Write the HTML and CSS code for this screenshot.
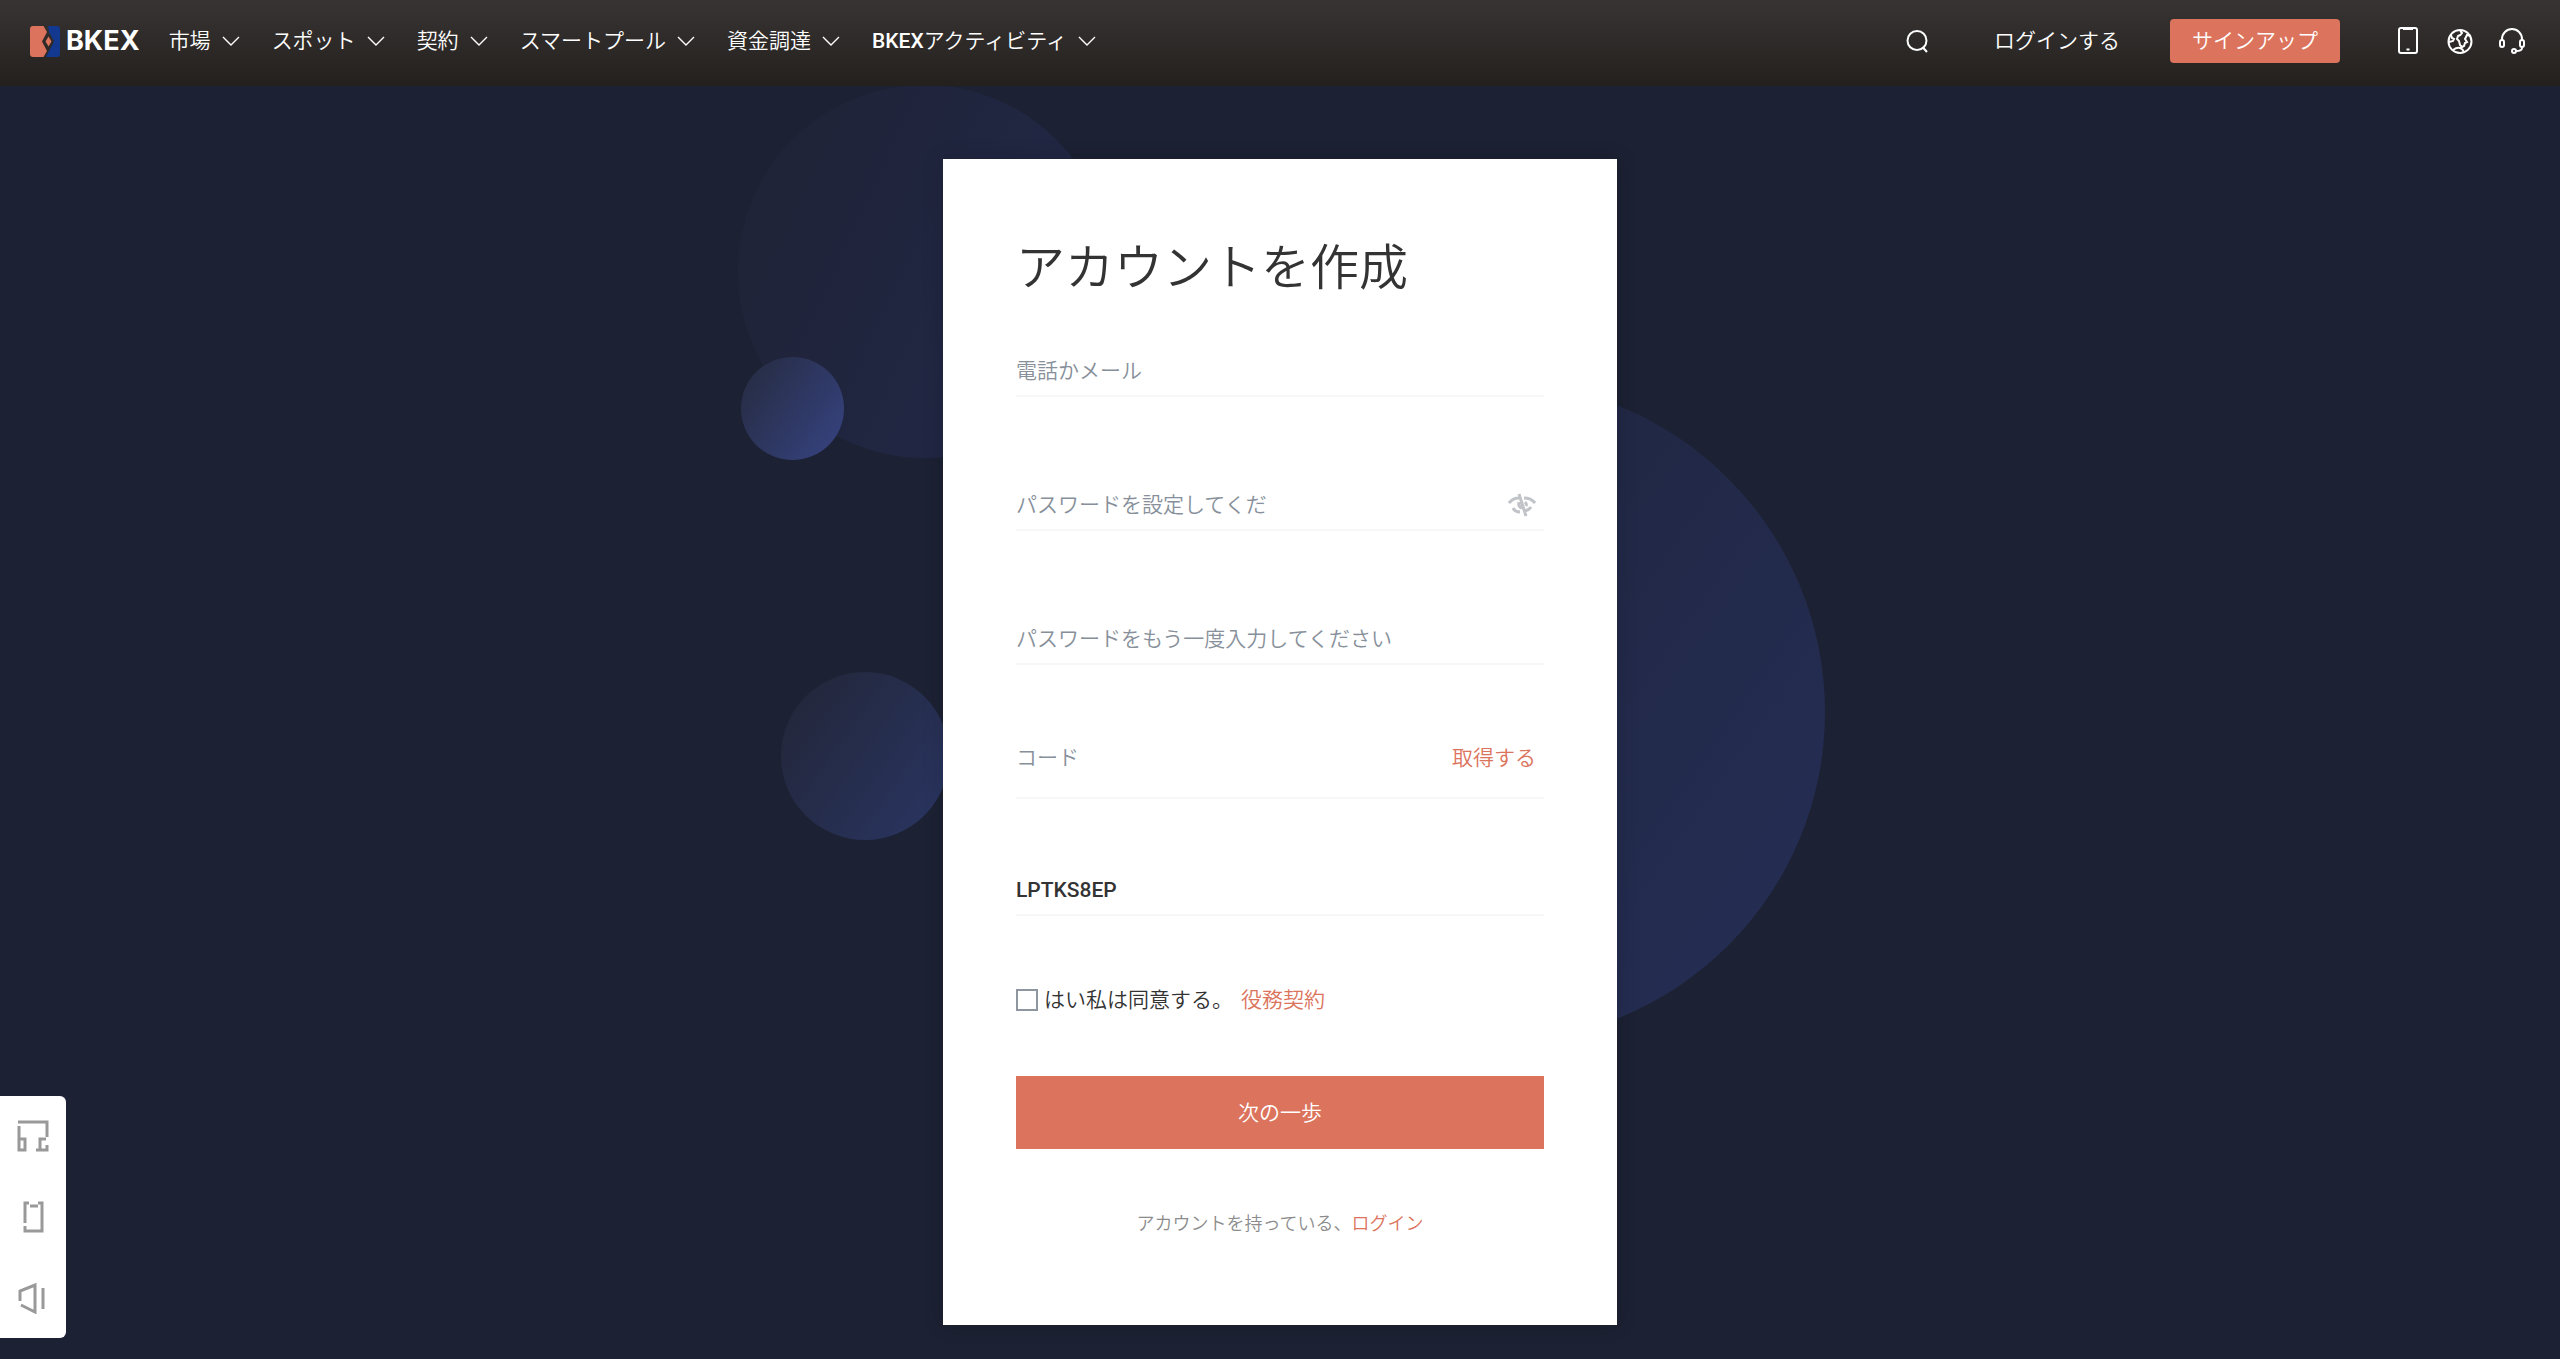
FILE: index.html
```html
<!DOCTYPE html>
<html lang="ja">
<head>
    <meta charset="UTF-8">
    <meta name="viewport" content="width=device-width, initial-scale=1.0">
    <title>BKEX</title>
    <link rel="stylesheet" href="styles.css">
</head>
<body>
    <!-- Shared chevron -->
    <svg class="sprite" aria-hidden="true">
        <symbol id="chevron" viewBox="0 0 18 10">
            <path d="M1 1l8 8 8-8" fill="none" stroke="currentColor" stroke-width="1.4"/>
        </symbol>
    </svg>

    <header class="header">
        <a class="logo" href="#">
            <svg width="30" height="31" viewBox="0 0 30 31" aria-hidden="true">
                <path d="M3 0h10.500l3.500 6-5 9.500 5 9.500-3.500 6H3q-3 0-3-3V3q0-3 3-3z" fill="#dc735c"/>
                <path d="M18 0h9q3 0 3 3v25q0 3-3 3H16l3-6 5-9.500-5-9.500z" fill="#12398f"/>
                <path d="M18.500 10.500l3 5-3 5-3-5z" fill="#dc735c"/>
            </svg>
            <span>BKEX</span>
        </a>
        <nav class="nav">
            <a href="#">市場 <svg class="chevron"><use href="#chevron"/></svg></a>
            <a href="#">スポット <svg class="chevron"><use href="#chevron"/></svg></a>
            <a href="#">契約 <svg class="chevron"><use href="#chevron"/></svg></a>
            <a href="#">スマートプール <svg class="chevron"><use href="#chevron"/></svg></a>
            <a href="#">資金調達 <svg class="chevron"><use href="#chevron"/></svg></a>
            <a href="#"><span><b>BKEX</b>アクティビティ</span> <svg class="chevron"><use href="#chevron"/></svg></a>
        </nav>
        <div class="header-right">
            <button class="icon-btn" type="button" aria-label="検索">
                <svg width="24" height="24" viewBox="0 0 24 24">
                    <circle cx="11" cy="11.500" r="9.500"/>
                    <path d="M16.500 18l4.500 5"/>
                </svg>
            </button>
            <a class="login" href="#">ログインする</a>
            <a class="signup" href="#">サインアップ</a>
            <div class="tools">
                <button class="icon-btn" type="button" aria-label="アプリ">
                    <svg width="28" height="28" viewBox="0 0 28 28">
                        <rect x="5" y="1" width="18" height="25" rx="2"/>
                        <path d="M9 2h10M12.500 22.500h3"/>
                    </svg>
                </button>
                <button class="icon-btn" type="button" aria-label="言語">
                    <svg width="28" height="28" viewBox="0 0 28 28">
                        <circle cx="14" cy="14.500" r="11.500"/>
                        <path d="M14 3q1 2 2 3-1 2-4 3l-1 3 2 2 1 4 2 2 2-1 1-3 2-1-2-3 2-4 4 1M5 8l1 3 2 1-1 2-4 1M7 23q4-3 7-2 3 1 4 4"/>
                    </svg>
                </button>
                <button class="icon-btn" type="button" aria-label="サポート">
                    <svg width="28" height="28" viewBox="0 0 28 28">
                        <path d="M4 14v-2a10 10 0 0 1 20 0v2M24 20v1q0 3-6 3"/>
                        <rect x="2" y="13" width="4" height="7" rx="2"/>
                        <rect x="22" y="13" width="4" height="7" rx="2"/>
                        <circle cx="16" cy="24" r="2"/>
                    </svg>
                </button>
            </div>
        </div>
    </header>

    <main class="main">
        <div class="card-wrap">
            <!-- Background circles -->
            <span class="circle circle-top"></span>
            <span class="circle circle-small"></span>
            <span class="circle circle-mid"></span>
            <span class="circle circle-right"></span>

            <form class="card">
                <h1>アカウントを作成</h1>
                <div class="field">
                    <input type="text" aria-label="電話かメール" placeholder="電話かメール">
                </div>
                <div class="field">
                    <input class="short" type="password" aria-label="パスワード" placeholder="パスワードを設定してください">
                    <button class="eye" type="button" aria-label="パスワードを表示">
                        <svg width="28" height="24" viewBox="0 0 28 24">
                            <path d="M1 10Q5 5 11 5M16 5q7 0 11 5M5 15q2 4 7 4M17 18q4-1 6-4M11 9q-1 5 3 6M17 9q2 2 1 4M11 1l7 22"/>
                        </svg>
                    </button>
                </div>
                <div class="field">
                    <input type="password" aria-label="パスワード確認" placeholder="パスワードをもう一度入力してください">
                </div>
                <div class="field field-code">
                    <input type="text" aria-label="コード" placeholder="コード">
                    <button class="get-code" type="button">取得する</button>
                </div>
                <div class="field field-invite">
                    <input type="text" aria-label="招待コード" value="LPTKS8EP">
                </div>
                <div class="agree">
                    <input type="checkbox" id="agree">
                    <label for="agree">はい私は同意する。</label>
                    <a href="#">役務契約</a>
                </div>
                <button class="submit" type="submit">次の一歩</button>
                <p class="have-account">アカウントを持っている、<a href="#">ログイン</a></p>
            </form>
        </div>
    </main>

    <!-- Floating toolbar -->
    <aside class="side">
        <button type="button" aria-label="サポート">
            <svg width="32" height="32" viewBox="0 0 32 32">
                <path d="M1 2h29v15M2 6v24h6V19H2M29 19h-6v10M19 30h11v-5"/>
            </svg>
        </button>
        <button type="button" aria-label="アプリ">
            <svg width="32" height="32" viewBox="0 0 32 32">
                <path d="M12 2H8v20M8 25v5h17V2h-4M13 5h8"/>
            </svg>
        </button>
        <button type="button" aria-label="お知らせ">
            <svg width="32" height="32" viewBox="0 0 32 32">
                <path d="M3 19V9l15-6v27L4 23M26 6v21"/>
            </svg>
        </button>
    </aside>
</body>
</html>
```
FILE: styles.css
```css
:root {
    --primary: #dc735c;
    --bg: #1c2133;
    --text: #333;
    --muted: #87909a;
    --line: #f7f7f7;
}

* {
    box-sizing: border-box;
    margin: 0;
    padding: 0;
}

body {
    min-height: 100vh;
    display: flex;
    flex-direction: column;
    background: var(--bg);
    color: var(--text);
    font-family: Roboto, "Noto Sans CJK JP", sans-serif;
    font-size: 21px;
    font-weight: 350;
    line-height: 32px;
}

a {
    color: var(--primary);
    text-decoration: none;
}

button,
input {
    font: inherit;
    border: none;
    background: none;
    outline: none;
}

button {
    cursor: pointer;
}

svg {
    display: block;
    flex: none;
}

.sprite {
    position: absolute;
    width: 0;
    height: 0;
}

/* Header */
.header {
    display: flex;
    align-items: center;
    height: 86px;
    padding: 0 34px 4px 30px;
    background: linear-gradient(#383433, #24201e);
    color: #fff;
}

.logo {
    display: flex;
    align-items: center;
    gap: 6px;
    margin-right: 29px;
    color: #fff;
    font-family: Inter, sans-serif;
    font-size: 27px;
    font-weight: 700;
}

.nav {
    display: flex;
    gap: 32px;
}

.nav a {
    display: flex;
    align-items: center;
    gap: 11px;
    color: #fff;
    white-space: nowrap;
}

.nav b {
    font-weight: 500;
}

.chevron {
    width: 18px;
    height: 10px;
}

.header-right {
    display: flex;
    align-items: center;
    margin-left: auto;
}

.icon-btn svg {
    fill: none;
    stroke: #fff;
    stroke-width: 2;
}

.login {
    margin: 0 50px 0 64px;
    color: #fff;
}

.signup {
    padding: 6px 22px;
    border-radius: 4px;
    background: var(--primary);
    color: #fff;
}

.tools {
    display: flex;
    gap: 24px;
    margin-left: 54px;
}

/* Form */
.main {
    flex: 1;
    padding: 73px 20px 35px;
    overflow: hidden;
}

.card-wrap {
    position: relative;
    max-width: 674px;
    margin: 0 auto;
}

.card {
    position: relative;
    padding: 78px 73px 85px;
    background: #fff;
    box-shadow: 0 0 20px rgba(0, 0, 0, 0.15);
}

.circle {
    position: absolute;
    border-radius: 50%;
}

.circle-top {
    top: -74px;
    left: -205px;
    width: 373px;
    height: 373px;
    background: linear-gradient(115deg, #1e2335, #212642 60%, #1f2848);
}

.circle-small {
    top: 198px;
    left: -202px;
    width: 103px;
    height: 103px;
    background: linear-gradient(125deg, #272d45 10%, #35417c 90%);
}

.circle-mid {
    top: 513px;
    left: -162px;
    width: 168px;
    height: 168px;
    background: linear-gradient(125deg, #23273b 10%, #29345f 90%);
}

.circle-right {
    top: 223px;
    left: 222px;
    width: 660px;
    height: 660px;
    background: linear-gradient(125deg, #1e2338, #252e56);
}

h1 {
    margin-bottom: 42px;
    font-size: 49px;
    font-weight: 350;
    line-height: 64px;
}

.field {
    display: flex;
    align-items: center;
    height: 54px;
    margin-bottom: 80px;
    padding-top: 3px;
    border-bottom: 2px solid var(--line);
}

.field input {
    flex: 1;
    min-width: 0;
    height: 100%;
    color: var(--text);
}

.field .short {
    flex: 0 0 254px;
}

.field ::placeholder {
    color: var(--muted);
    opacity: 1;
}

.eye {
    margin: 0 8px 0 auto;
}

.eye svg {
    fill: none;
    stroke: #c0c3c7;
    stroke-width: 3;
}

.field:nth-of-type(3) {
    margin-bottom: 50px;
}

.field-code {
    height: 84px;
    margin-bottom: 63px;
}

.get-code {
    margin-right: 8px;
    color: var(--primary);
}

.field-invite {
    margin-bottom: 68px;
}

.field-invite input {
    font-weight: 500;
}

.agree {
    display: flex;
    align-items: center;
    margin-bottom: 60px;
}

.agree input {
    appearance: none;
    width: 22px;
    height: 22px;
    margin-right: 6px;
    border: 2px solid #8e979f;
}

.agree a {
    margin-left: 8px;
}

.submit {
    width: 100%;
    height: 73px;
    margin-bottom: 59px;
    background: var(--primary);
    color: #fff;
}

.have-account {
    color: #8c8c8c;
    font-size: 18px;
    text-align: center;
}

/* Floating toolbar */
.side {
    position: fixed;
    left: 0;
    bottom: 21px;
    display: flex;
    flex-direction: column;
    gap: 49px;
    padding: 24px 17px 24px 17px;
    border-radius: 0 6px 6px 0;
    background: #fff;
}

.side svg {
    fill: none;
    stroke: #999;
    stroke-width: 3;
}
```
